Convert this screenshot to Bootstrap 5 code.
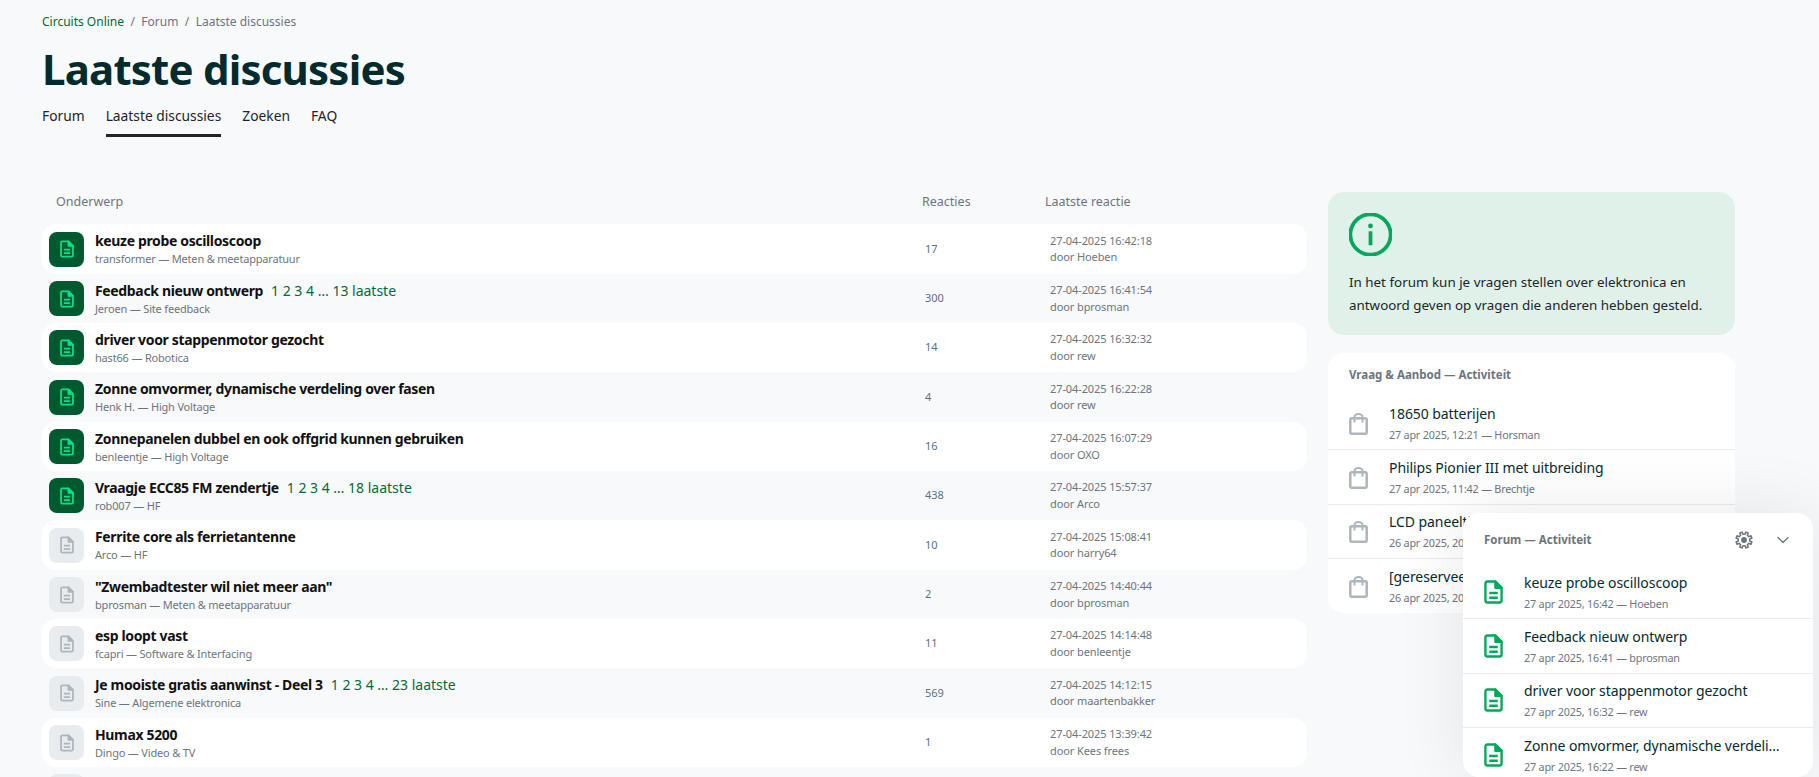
<!doctype html>
<html lang="nl"><head><meta charset="utf-8"><title>Laatste discussies</title>
<link href="https://cdn.jsdelivr.net/npm/bootstrap@5.3.0/dist/css/bootstrap.min.css" rel="stylesheet">
<style>
html,body{height:777px;overflow:hidden}
body{background:#f8f9fa;font-family:"Noto Sans","Open Sans",sans-serif;color:#212529;position:relative}
.pg{padding:13px 84px 0 42px}
.crumbs{font-size:12px;--bs-breadcrumb-margin-bottom:0;--bs-breadcrumb-divider-color:#6c757d;--bs-breadcrumb-item-active-color:#6c757d;--bs-breadcrumb-item-padding-x:.4rem}
.crumbs a{color:#00693e;text-decoration:none}
.ttl{font-size:42px;font-weight:700;letter-spacing:-.8px;color:#032b2d;margin:8px 0 6px;line-height:60px}
.tabs .nav-link{color:#212529;padding:0 0 7px;font-size:13.8px;line-height:22px;border-bottom:3px solid transparent}
.tabs .nav-link.active{border-color:#212529}
.tabs{gap:21px}
.cols{display:flex;gap:21px;margin-top:31px}
.mainc{width:1265px;flex:none}
.side{width:407px;flex:none;margin-top:24px}
.dt{border-collapse:separate;border-spacing:0;width:100%;table-layout:fixed;margin:0}
.dt th{font-size:12.5px;font-weight:400;color:#6c757d;padding:26px 0 14px;line-height:16px}
.dt th:first-child{padding-left:14px}
.dt td{height:49px;padding:0;vertical-align:middle;font-size:11px;letter-spacing:-.1px;color:#6c757d;line-height:16.5px}
.dt tbody tr:nth-child(3n+1) td{height:50px}
.dt tbody tr:nth-child(odd) td{background:#fff}
.dt td:first-child{border-radius:14px 0 0 14px}
.dt td:last-child{border-radius:0 14px 14px 0;padding-left:5px}
.dt td:nth-child(2){padding-left:3px;color:#5b6f85}
.rowh{display:flex;align-items:center;gap:11px}
.tile{width:35px;height:35px;border-radius:8px;background:#00592f;color:#00e28a;margin-left:7px;flex:none;display:flex;align-items:center;justify-content:center}
.tile.off{background:#e9ecef;color:#adb5bd}
.subj{font-size:14px;font-weight:700;color:#111;line-height:20px;letter-spacing:-.35px}
.pgs{font-weight:400;color:#00693e;margin-left:8px;letter-spacing:0}
.who{font-size:11px;letter-spacing:-.18px;color:#6c757d;line-height:16px}
.cinfo{background:#e0f1ea;border-radius:16px;padding:21px;font-size:13.4px;line-height:23px;color:#212529;height:143px}
.cinfo svg{display:block;margin-bottom:15px}
.acard{background:#fff;border-radius:16px;margin-top:18px;overflow:hidden}
.ahead{font-size:11.5px;font-weight:700;color:#6c757d;padding:13px 21px 12px;line-height:18px}
.aitem{display:flex;align-items:center;height:54.3px;border-bottom:1px solid #e9ecef;padding-left:21px}
.aitem:last-child{border-bottom:0}
.aic{width:20px;margin-right:20px;flex:none;color:#adb5bd;display:flex}
.acard .aic{padding-top:2px}
.atx{min-width:0;flex:1;padding-top:1px}
.att{font-size:14px;letter-spacing:-.07px;color:#032b2d;line-height:20px;white-space:nowrap;overflow:hidden;text-overflow:ellipsis}
.ame{font-size:10.8px;letter-spacing:-.2px;color:#6c757d;line-height:16px;margin-top:3px}
.pop{position:absolute;left:1463px;top:513px;width:350px;height:264px;background:#fff;border-radius:16px;box-shadow:0 0 70px rgba(0,0,0,.09);overflow:hidden}
.pop .ahead{padding:14px 21px 12px;display:flex;align-items:center;line-height:26px}
.pop .aitem{padding-right:30px}
.pop .aic{color:#00a85a}
.gear{margin-right:24px}
.chev{margin-right:3px}
</style></head><body>
<div class="pg">
<nav><ol class="breadcrumb crumbs"><li class="breadcrumb-item"><a href="#">Circuits Online</a></li><li class="breadcrumb-item active">Forum</li><li class="breadcrumb-item active">Laatste discussies</li></ol></nav>
<h1 class="ttl">Laatste discussies</h1>
<ul class="nav tabs"><li class="nav-item"><a class="nav-link" href="#">Forum</a></li><li class="nav-item"><a class="nav-link active" href="#">Laatste discussies</a></li><li class="nav-item"><a class="nav-link" href="#">Zoeken</a></li><li class="nav-item"><a class="nav-link" href="#">FAQ</a></li></ul>
<div class="cols">
<div class="mainc"><table class="dt" id="t"><colgroup><col style="width:880px"><col style="width:123px"><col></colgroup>
<thead><tr><th>Onderwerp</th><th>Reacties</th><th>Laatste reactie</th></tr></thead><tbody></tbody></table></div>
<aside class="side">
<div class="cinfo"><svg width="43" height="43" viewBox="0 0 16 16" fill="#00a85a"><path d="M8 15A7 7 0 1 1 8 1a7 7 0 0 1 0 14zm0 1A8 8 0 1 0 8 0a8 8 0 0 0 0 16z" stroke="#00a85a" stroke-width=".4"/><path d="M7.3 6.8h1.4v5.2H7.300z"/><circle cx="8" cy="4.800" r=".9"/></svg>In het forum kun je vragen stellen over elektronica en antwoord geven op vragen die anderen hebben gesteld.</div>
<div class="acard"><div class="ahead">Vraag &amp; Aanbod — Activiteit</div><div id="a"></div></div>
</aside></div></div>
<div class="pop"><div class="ahead"><span class="flex-grow-1">Forum — Activiteit</span>
<svg class="gear" width="18" height="18" viewBox="0 0 16 16"><circle cx="8" cy="8" r="2.600" fill="#6c757d"/><path id="gr" fill="none" stroke="#6c757d" stroke-width="1.400" stroke-linejoin="round"/></svg>
<svg class="chev" width="12" height="8" viewBox="0 0 12 8" fill="none" stroke="#6c757d" stroke-width="1.300" stroke-linecap="round" stroke-linejoin="round"><path d="M1 1.500l5 5 5-5"/></svg></div><div id="p"></div></div>
<script src="https://cdn.jsdelivr.net/npm/bootstrap@5.3.0/dist/js/bootstrap.bundle.min.js"></script>
<script>
let g="";for(let i=0;i<8;i++){const a=i*Math.PI/4+Math.PI/8;[[-.2,5.2],[-.14,7.2],[.14,7.2],[.2,5.2]].forEach((p,j)=>{const t=a+p[0]*1.1;g+=((i||j)?"L":"M")+(8+p[1]*Math.cos(t)).toFixed(2)+" "+(8+p[1]*Math.sin(t)).toFixed(2)})}
document.getElementById("gr").setAttribute("d",g+"Z");
const doc=(w,h)=>`<svg width="${w}" height="${h}" viewBox="0 0 20 25" fill="none" stroke="currentColor" stroke-width="2.500" stroke-linejoin="round"><path d="M3.500 1.500h8.500l6.500 6.500v13.500a2 2 0 0 1-2 2h-13a2 2 0 0 1-2-2V3.500a2 2 0 0 1 2-2z"/><path d="M12 1.500l6.500 6.500H12z" fill="currentColor"/><path d="M5.500 13.500h9M5.500 18.500h9"/></svg>`;
const bag=`<svg width="19" height="22" viewBox="0 0 19 22" fill="none" stroke="currentColor" stroke-width="2"><rect x="1.300" y="5.300" width="16.400" height="15.400" rx="1.500" stroke-width="2.500"/><path d="M5.500 9.500V4a4 3 0 0 1 8 0v5.500"/></svg>`;
const rows=[["keuze probe oscilloscoop","","transformer — Meten & meetapparatuur","17","27-04-2025 16:42:18","Hoeben",1],
["Feedback nieuw ontwerp","1 2 3 4 … 13 laatste","Jeroen — Site feedback","300","27-04-2025 16:41:54","bprosman",1],
["driver voor stappenmotor gezocht","","hast66 — Robotica","14","27-04-2025 16:32:32","rew",1],
["Zonne omvormer, dynamische verdeling over fasen","","Henk H. — High Voltage","4","27-04-2025 16:22:28","rew",1],
["Zonnepanelen dubbel en ook offgrid kunnen gebruiken","","benleentje — High Voltage","16","27-04-2025 16:07:29","OXO",1],
["Vraagje ECC85 FM zendertje","1 2 3 4 … 18 laatste","rob007 — HF","438","27-04-2025 15:57:37","Arco",1],
["Ferrite core als ferrietantenne","","Arco — HF","10","27-04-2025 15:08:41","harry64",0],
["\"Zwembadtester wil niet meer aan\"","","bprosman — Meten & meetapparatuur","2","27-04-2025 14:40:44","bprosman",0],
["esp loopt vast","","fcapri — Software & Interfacing","11","27-04-2025 14:14:48","benleentje",0],
["Je mooiste gratis aanwinst - Deel 3","1 2 3 4 … 23 laatste","Sine — Algemene elektronica","569","27-04-2025 14:12:15","maartenbakker",0],
["Humax 5200","","Dingo — Video & TV","1","27-04-2025 13:39:42","Kees frees",0],
["","","","","","",0]];
const esc=s=>s.replace(/&/g,"&amp;");
document.querySelector("#t tbody").innerHTML=rows.map(r=>`<tr><td><div class="rowh"><div class="tile ${r[6]?'':'off'}">${doc(14,18)}</div><div><div class="subj">${r[0]}${r[1]?`<span class="pgs">${r[1]}</span>`:''}</div><div class="who">${esc(r[2])}</div></div></div></td><td>${r[3]}</td><td>${r[4]}<br>${r[5]?'door '+r[5]:''}</td></tr>`).join("");
const item=(ic,t,m)=>`<div class="aitem"><div class="aic">${ic}</div><div class="atx"><div class="att">${t}</div><div class="ame">${m}</div></div></div>`;
document.getElementById("a").innerHTML=[["18650 batterijen","27 apr 2025, 12:21 — Horsman"],["Philips Pionier III met uitbreiding","27 apr 2025, 11:42 — Brechtje"],["LCD paneeltje","26 apr 2025, 20:15 — Arco"],["[gereserveerd] onderdelen","26 apr 2025, 20:02 — rew"]].map(x=>item(bag,x[0],x[1])).join("");
document.getElementById("p").innerHTML=[["keuze probe oscilloscoop","27 apr 2025, 16:42 — Hoeben"],["Feedback nieuw ontwerp","27 apr 2025, 16:41 — bprosman"],["driver voor stappenmotor gezocht","27 apr 2025, 16:32 — rew"],["Zonne omvormer, dynamische verdeling over fasen","27 apr 2025, 16:22 — rew"]].map(x=>item(doc(19,24),x[0],x[1])).join("");
</script>
</body></html>
